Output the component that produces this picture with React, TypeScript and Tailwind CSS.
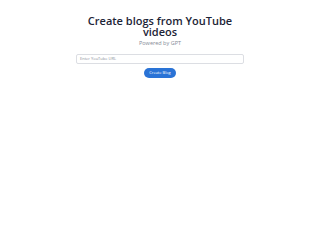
export default function App() {
  return (
    <div className="min-h-screen bg-white flex flex-col items-center pt-[15px] font-['Open_Sans',sans-serif]">
      <h1 className="text-center text-[11px] leading-[11px] font-semibold text-[#1c2436] tracking-[0px]">
        Create blogs from YouTube
        <br />
        videos
      </h1>
      <p className="mt-[3px] text-[5.5px] leading-[7px] text-[#858b96]">Powered by GPT</p>
      <div className="mt-[7px] w-[168px] h-[10px] border border-[#dcdee3] rounded-[2px] flex items-center px-[3px]">
        <span className="text-[4px] text-[#8a8f99]">Enter YouTube URL</span>
      </div>
      <button className="mt-[4px] w-[32px] h-[10px] rounded-full bg-[#2a73d6] text-white text-[4px] flex items-center justify-center">
        Create Blog
      </button>
    </div>
  );
}
